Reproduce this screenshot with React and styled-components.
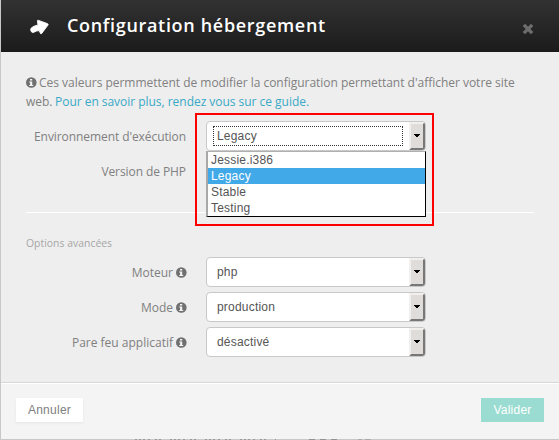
import React from "react";
import styled, { createGlobalStyle } from "styled-components";

const GlobalStyle = createGlobalStyle`
  * { box-sizing: border-box; }
  body { margin: 0; background: #eee; overflow: hidden; }
`;

const Dialog = styled.main`
  width: 559px;
  height: 440px;
  display: flex;
  flex-direction: column;
  background: #eee;
  border-left: 1px solid #c8c8c8;
  font: 12px/19px "Open Sans", sans-serif;
  color: #808080;
`;

const Header = styled.header`
  height: 52px;
  flex: none;
  display: flex;
  align-items: center;
  padding: 0 25px 0 28px;
  background: linear-gradient(#323232, #1b1b1b);
  color: #fff;
`;

const Title = styled.h1`
  flex: 1;
  margin: 0 0 3px 17px;
  font: 600 18px/26px "Open Sans", sans-serif;
  letter-spacing: 0.68px;
  white-space: nowrap;
`;

const CloseButton = styled.button`
  display: flex;
  padding: 0;
  margin-top: 6px;
  border: 0;
  background: none;
  color: #6c6c6c;
`;

const Body = styled.section`
  flex: 1;
  padding: 21px 25px 0;
`;

const Intro = styled.div`
  height: 38px;
  margin-bottom: 10px;
`;

const Line = styled.div`
  display: flex;
  align-items: center;
  height: 19px;
  white-space: pre;
  letter-spacing: ${(p) => p.$spacing};
`;

const IconSlot = styled.span`
  display: flex;
  margin: 0 2px 0 0;
`;

const GuideLink = styled.a`
  margin-left: -0.5px;
  color: #38a9c6;
`;

const Row = styled.div`
  display: flex;
  align-items: center;
  height: 30px;
  margin-bottom: 5px;
`;

const Label = styled.label`
  width: 160px;
  margin-right: 20px;
  display: flex;
  justify-content: flex-end;
  align-items: center;
  gap: 3px;
  white-space: nowrap;
  letter-spacing: ${(p) => p.$spacing || "0"};

  svg {
    margin-right: -1px;
  }
`;

const SelectBox = styled.div`
  position: relative;
  display: flex;
  width: 220px;
  height: 30px;
  border: 1px solid #c8c8c8;
  border-radius: 4px;
  background: #fff;
  font: 12px/20px "Liberation Sans", Arial, sans-serif;
  letter-spacing: 0.2px;
  color: #555;
`;

const Value = styled.span`
  width: 190px;
  height: 20px;
  margin: 4px 6px;
  padding-left: 3px;
  border: 1px dotted ${(p) => (p.$focused ? "#333" : "transparent")};
  line-height: 18px;
`;

const Arrow = styled.span`
  width: 16px;
  height: 28px;
  display: flex;
  align-items: center;
  justify-content: center;
  border: 2px solid;
  border-color: #f2f0ee #777 #777 #f2f0ee;
  border-radius: 0 3px 3px 0;
  background: #e0dcd9;
`;

const Options = styled.ul`
  position: absolute;
  z-index: 1;
  top: 29px;
  left: -1px;
  width: 220px;
  height: 66px;
  margin: 0;
  padding: 0;
  list-style: none;
  background: #fff;
  border: 1px solid #000;
  border-top: 1px solid #b0b0b0;
  border-left: 2px solid #a8a8a8;
`;

const Option = styled.li`
  height: 16px;
  padding-left: 3px;
  line-height: 16px;
  background: ${(p) => (p.$selected ? "#42a9e8" : "#fff")};
  color: ${(p) => (p.$selected ? "#fff" : "#555")};
`;

const Highlight = styled.div`
  position: absolute;
  z-index: 2;
  left: -12px;
  top: -9px;
  width: 239px;
  height: 113px;
  border: 2px solid #f00;
  pointer-events: none;
`;

const Divider = styled.hr`
  height: 1px;
  margin: 26px 0 20px;
  border: 0;
  background: #fff;
`;

const SectionTitle = styled.h2`
  height: 20px;
  margin: 0 0 4px;
  font: 10.4px/20px "Open Sans", sans-serif;
  letter-spacing: 0.02px;
  color: #a6a6a6;
`;

const Footer = styled.footer`
  height: 57px;
  flex: none;
  display: flex;
  justify-content: space-between;
  padding: 14px 15px 0;
  border-top: 1px solid #d8d8d8;
  box-shadow: inset 0 1px #fff;
  background: #f4f4f4;
`;

const Button = styled.button`
  width: ${(p) => (p.$primary ? "63px" : "67px")};
  height: 24px;
  margin-top: 1px;
  padding: 0;
  border: 0;
  background: ${(p) => (p.$primary ? "#9adcd1" : "#fff")};
  color: ${(p) => (p.$primary ? "#fff" : "#808080")};
  box-shadow: ${(p) => (p.$primary ? "none" : "0 1px 2px #e5e5e5")};
  font: 12px/24px "Liberation Sans", Arial, sans-serif;
  letter-spacing: 0.25px;
`;

const BottomEdge = styled.svg`
  display: block;
  flex: none;
  background: #c8c8c8;
`;

const InfoIcon = () => (
  <svg width="11" height="11" viewBox="0 0 11 11">
    <circle cx="5.3" cy="5.5" r="5.3" fill="#707070" />
    <path d="M4 2h2.2v1.4H4zM3.2 4.4h3V8h1v1H3.2V8h.9V5.4h-.9z" fill="#f3f3f3" />
  </svg>
);

const HandIcon = () => (
  <svg width="21" height="17" viewBox="0 0 21 17">
    <path
      d="M2.2 10.1Q4.2 7.9 9 7L8.4 2.8Q8.4 1.9 9.6 2.4L18.6 5.7Q19.6 6.2 19 7L12.6 15.6Q11.8 16.4 11.4 15.3L10.2 12.6Q6.8 12.8 4.5 14.4Q3.3 14.9 2.2 13.5Q1 11.5 2.2 10.1Z"
      fill="#fff"
      stroke="#fff"
      strokeWidth="0.9"
      strokeLinejoin="round"
    />
  </svg>
);

const CloseIcon = () => (
  <svg width="12" height="12" viewBox="0 0 12 12">
    <path d="M3 3L9 9M9 3L3 9" stroke="currentColor" strokeWidth="3.3" strokeLinecap="square" />
  </svg>
);

const Select = ({ value, focused, children }) => (
  <SelectBox>
    <Value $focused={focused}>{value}</Value>
    <Arrow>
      <svg width="6" height="4" viewBox="0 0 6 4" shapeRendering="crispEdges">
        <path d="M0 0h6v1H5v1H4v1H2V2H1V1H0z" fill="#000" />
      </svg>
    </Arrow>
    {children}
  </SelectBox>
);

const environments = ["Jessie.i386", "Legacy", "Stable", "Testing"];
const advanced = [
  { label: "Moteur", value: "php" },
  { label: "Mode", value: "production" },
  { label: "Pare feu applicatif", value: "désactivé" },
];

export default function App() {
  return (
    <Dialog>
      <GlobalStyle />
      <Header>
        <HandIcon />
        <Title>Configuration hébergement</Title>
        <CloseButton aria-label="Fermer"><CloseIcon /></CloseButton>
      </Header>
      <Body>
        <Intro>
          <Line $spacing="-0.02px">
            <IconSlot><InfoIcon /></IconSlot>
            <span>Ces valeurs permmettent de modifier la configuration permettant d'afficher votre site</span>
          </Line>
          <Line $spacing="-0.03px">web. <GuideLink>Pour en savoir plus, rendez vous sur ce guide.</GuideLink></Line>
        </Intro>
        <Row>
          <Label $spacing="-0.08px">Environnement d'exécution</Label>
          <Select value="Legacy" focused>
            <Options>
              {environments.map((name) => (
                <Option key={name} $selected={name === "Legacy"}>{name}</Option>
              ))}
            </Options>
            <Highlight />
          </Select>
        </Row>
        <Row><Label $spacing="-0.08px">Version de PHP</Label></Row>
        <Divider />
        <SectionTitle>Options avancées</SectionTitle>
        {advanced.map(({ label, value }) => (
          <Row key={label}>
            <Label>{label}<InfoIcon /></Label>
            <Select value={value} />
          </Row>
        ))}
      </Body>
      <Footer>
        <Button>Annuler</Button>
        <Button $primary>Valider</Button>
      </Footer>
      <BottomEdge width="558" height="1" viewBox="0 0 558 1">
        <path d="M134 .5H275" stroke="#999" strokeDasharray="2 2 2 2 2 3 2 5 2 2 2 9" />
        <path d="M308 .5h6m5 0h6m5 0h6" stroke="#929292" />
        <path d="M357 .5h4m3 0h6" stroke="#aaa" />
      </BottomEdge>
    </Dialog>
  );
}
